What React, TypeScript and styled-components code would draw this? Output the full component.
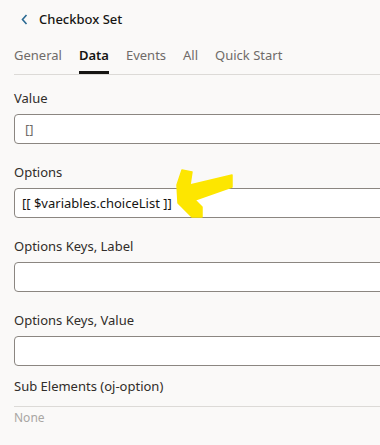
import React from 'react';
import { styled, createGlobalStyle } from 'styled-components';

const GlobalStyle = createGlobalStyle`
  html, body {
    margin: 0;
    padding: 0;
    background: #faf9f8;
    overflow: hidden;
  }
  body {
    font-family: "Noto Sans", "Open Sans", sans-serif;
    color: #161513;
  }
`;

const Panel = styled.div`
  position: relative;
  width: 380px;
  height: 445px;
  overflow: hidden;
  background: #faf9f8;
`;

const Header = styled.div`
  height: 38px;
  display: flex;
  align-items: center;
  padding-left: 20px;
  gap: 11px;
`;

const BackButton = styled.button`
  border: none;
  background: none;
  padding: 0;
  width: 8px;
  height: 12px;
  display: flex;
  align-items: center;
  justify-content: center;
  color: #2b6a93;
  cursor: pointer;
`;

const Title = styled.div`
  font-size: 13px;
  font-weight: 500;
  color: #161513;
`;

const TabBar = styled.div`
  display: flex;
  gap: 17px;
  margin-left: 14px;
  border-bottom: 1px solid #dcdad7;
`;

const Tab = styled.div<{ $active?: boolean }>`
  box-sizing: border-box;
  height: 36px;
  padding-top: 7px;
  line-height: 20px;
  font-size: 13px;
  font-weight: ${(p) => (p.$active ? 600 : 400)};
  color: ${(p) => (p.$active ? '#161513' : '#6f6b68')};
  border-bottom: 3px solid ${(p) => (p.$active ? '#161513' : 'transparent')};
`;

const Body = styled.div`
  padding: 13px 0 0 14px;
  display: flex;
  flex-direction: column;
  gap: 18px;
`;

const Field = styled.div`
  display: flex;
  flex-direction: column;
  gap: 6px;
`;

const Label = styled.div`
  font-size: 13px;
  line-height: 20px;
  color: #312d2a;
`;

const Input = styled.div<{ $muted?: boolean }>`
  box-sizing: border-box;
  height: 30px;
  width: 400px;
  background: #ffffff;
  border: 1px solid #8b8681;
  border-radius: 4px;
  display: flex;
  align-items: center;
  padding-left: ${(p) => (p.$muted ? 10 : 7)}px;
  font-size: 13px;
  color: ${(p) => (p.$muted ? '#6f6b68' : '#161513')};
`;

const SubSection = styled.div`
  margin-top: -8px;
  display: flex;
  flex-direction: column;
`;

const SubHeading = styled.div`
  font-size: 13px;
  line-height: 20px;
  color: #312d2a;
  padding-bottom: 10px;
  border-bottom: 1px solid #dcdad7;
`;

const EmptyText = styled.div`
  font-size: 12px;
  line-height: 20px;
  padding-top: 1px;
  color: #a9a6a3;
`;

const Marker = styled.svg`
  position: absolute;
  left: 174px;
  top: 168px;
`;

const tabs = ['General', 'Data', 'Events', 'All', 'Quick Start'];

export default function App() {
  return (
    <Panel>
      <GlobalStyle />
      <Header>
        <BackButton aria-label="Back">
          <svg width="7" height="11" viewBox="0 0 7 11">
            <path d="M5.5 1 L1.5 5.5 L5.5 10" fill="none" stroke="currentColor" strokeWidth="1.6" />
          </svg>
        </BackButton>
        <Title>Checkbox Set</Title>
      </Header>
      <TabBar>
        {tabs.map((t) => (
          <Tab key={t} $active={t === 'Data'}>
            {t}
          </Tab>
        ))}
      </TabBar>
      <Body>
        <Field>
          <Label>Value</Label>
          <Input $muted>[]</Input>
        </Field>
        <Field>
          <Label>Options</Label>
          <Input>[[ $variables.choiceList ]]</Input>
        </Field>
        <Field>
          <Label>Options Keys, Label</Label>
          <Input />
        </Field>
        <Field>
          <Label>Options Keys, Value</Label>
          <Input />
        </Field>
        <SubSection>
          <SubHeading>Sub Elements (oj-option)</SubHeading>
          <EmptyText>None</EmptyText>
        </SubSection>
      </Body>
      <Marker width="62" height="52" viewBox="0 0 62 52">
        <polygon
          points="8,2 18,4 16,17 58,7 58,19 21,32 28,39 28,49 18,49 4,35 3,17"
          fill="#fde600"
          stroke="#fde600"
          strokeWidth="1.5"
          strokeLinejoin="round"
        />
      </Marker>
    </Panel>
  );
}
